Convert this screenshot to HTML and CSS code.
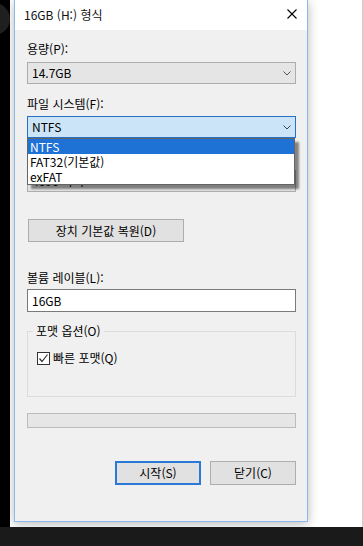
FILE: index.html
```html
<!DOCTYPE html>
<html lang="ko">
<head>
    <meta charset="UTF-8">
    <meta name="viewport" content="width=device-width, initial-scale=1.0">
    <title>16GB (H:) 형식</title>
    <link rel="stylesheet" href="styles.css">
</head>
<body>
    <div class="screen">
        <div class="desk">
            <div class="edge"><span class="blob"></span></div>
            <div class="area">
                <div class="dialog">
                    <div class="titlebar">
                        <span class="title">16GB (H:) 형식</span>
                        <svg class="close" width="10" height="10" viewBox="0 0 10 10">
                            <path d="M0.5 0.5 L9.5 9.5 M9.5 0.5 L0.5 9.5" stroke="#000" stroke-width="1.1" fill="none"/>
                        </svg>
                    </div>
                    <div class="content">
                        <div class="label first">용량(P):</div>
                        <div class="combo">
                            <span>14.7GB</span>
                            <svg class="arrow" width="8" height="5" viewBox="0 0 8 5"><path d="M0.5 0.5 L4 4 L7.5 0.5" stroke="#555" fill="none"/></svg>
                        </div>

                        <div class="label">파일 시스템(F):</div>
                        <div class="combo-wrap">
                            <div class="combo focused">
                                <span>NTFS</span>
                                <svg class="arrow" width="8" height="5" viewBox="0 0 8 5"><path d="M0.5 0.5 L4 4 L7.5 0.5" stroke="#444" fill="none"/></svg>
                            </div>
                            <ul class="dropdown">
                                <li class="selected">NTFS</li>
                                <li>FAT32(기본값)</li>
                                <li>exFAT</li>
                            </ul>
                        </div>

                        <div class="label">할당 단위 크기(A):</div>
                        <div class="combo">
                            <span>4096 바이트</span>
                            <svg class="arrow" width="8" height="5" viewBox="0 0 8 5"><path d="M0.5 0.5 L4 4 L7.5 0.5" stroke="#555" fill="none"/></svg>
                        </div>

                        <button class="btn restore">장치 기본값 복원(D)</button>

                        <div class="label volume">볼륨 레이블(L):</div>
                        <div class="textbox">16GB</div>

                        <fieldset class="group">
                            <legend>포맷 옵션(O)</legend>
                            <label class="check">
                                <span class="box">
                                    <svg width="11" height="11" viewBox="0 0 11 11"><path d="M1.5 5.5 L4 8.5 L9.5 1.5" stroke="#333" stroke-width="1.2" fill="none"/></svg>
                                </span>
                                빠른 포맷(Q)
                            </label>
                        </fieldset>

                        <div class="progress"></div>

                        <div class="actions">
                            <button class="btn default">시작(S)</button>
                            <button class="btn">닫기(C)</button>
                        </div>
                    </div>
                </div>
            </div>
        </div>
        <div class="taskbar"></div>
    </div>
</body>
</html>
```

FILE: styles.css
```css
* {
    box-sizing: border-box;
}
body {
    margin: 0;
    font-family: "Noto Sans CJK KR", "Noto Sans", sans-serif;
    font-size: 12px;
    color: #000;
    background-color: #fff;
}
.screen {
    width: 363px;
    height: 546px;
    display: flex;
    flex-direction: column;
    overflow: hidden;
}
.desk {
    height: 527px;
    display: flex;
}
.edge {
    width: 10px;
    background-color: #000;
    position: relative;
    overflow: hidden;
}
.blob {
    position: absolute;
    left: -22px;
    top: 3px;
    width: 32px;
    height: 32px;
    border-radius: 50%;
    background-color: #1f1f1f;
}
.area {
    flex: 1;
    background-color: #fff;
    padding-left: 4px;
    border-right: 1px solid #cfcfcf;
}
.dialog {
    width: 294px;
    height: 522px;
    background-color: #f0f0f0;
    border: 1px solid #8db6ea;
    border-top: none;
    box-shadow: 0 2px 10px rgba(0, 0, 0, 0.28);
}
.titlebar {
    height: 30px;
    background-color: #fff;
    display: flex;
    align-items: center;
    justify-content: space-between;
    padding: 0 10px 0 9px;
}
.title {
    line-height: 16px;
    color: #111;
}
.close {
    display: block;
    margin-top: -2px;
}
.content {
    padding: 11px 11px 0 12px;
}
.label {
    line-height: 16px;
    margin-top: 12px;
    margin-bottom: 4px;
}
.label.first {
    margin-top: 0;
    margin-bottom: 5px;
}
.combo {
    height: 22px;
    border: 1px solid #adadad;
    background-color: #e5e5e5;
    display: flex;
    align-items: center;
    justify-content: space-between;
    padding: 0 4px 0 4px;
    line-height: 16px;
}
.combo.focused {
    background-color: #cce4f7;
    border-color: #2a70c4;
}
.combo-wrap {
    position: relative;
}
.dropdown {
    position: absolute;
    left: 0;
    top: 22px;
    width: 268px;
    margin: 0;
    padding: 0;
    list-style: none;
    background-color: #fff;
    border: 1px solid #646464;
    box-shadow: 4px 4px 2px rgba(0, 0, 0, 0.45);
    z-index: 2;
}
.dropdown li {
    height: 15px;
    line-height: 15px;
    padding-left: 2px;
}
.dropdown li.selected {
    background-color: #1e72d6;
    color: #fff;
}
.btn {
    font-family: inherit;
    font-size: 12px;
    color: #000;
    background-color: #e1e1e1;
    border: 1px solid #adadad;
    padding: 0;
    line-height: 16px;
}
.restore {
    display: block;
    width: 156px;
    height: 23px;
    margin-top: 27px;
    margin-left: 1px;
}
.label.volume {
    margin-top: 28px;
    margin-bottom: 3px;
}
.textbox {
    height: 23px;
    border: 1px solid #7a7a7a;
    background-color: #fff;
    padding-left: 4px;
    line-height: 21px;
}
.group {
    margin: 11px 0 0;
    border: 1px solid #dcdcdc;
    padding: 11px 8px 30px 9px;
}
.group legend {
    padding: 0 3px;
    margin-left: -4px;
    line-height: 16px;
}
.check {
    display: flex;
    align-items: center;
    gap: 3px;
    line-height: 16px;
}
.box {
    width: 13px;
    height: 13px;
    border: 1px solid #333;
    background-color: #fff;
    display: flex;
    align-items: center;
    justify-content: center;
}
.box svg {
    display: block;
}
.progress {
    margin-top: 16px;
    height: 15px;
    border: 1px solid #bcbcbc;
    background-color: #e6e6e6;
}
.actions {
    margin-top: 33px;
    display: flex;
    justify-content: flex-end;
    gap: 9px;
}
.actions .btn {
    width: 86px;
    height: 24px;
}
.btn.default {
    border: 2px solid #2a79d6;
}
.taskbar {
    height: 19px;
    background-color: #1a1a1a;
}
```
